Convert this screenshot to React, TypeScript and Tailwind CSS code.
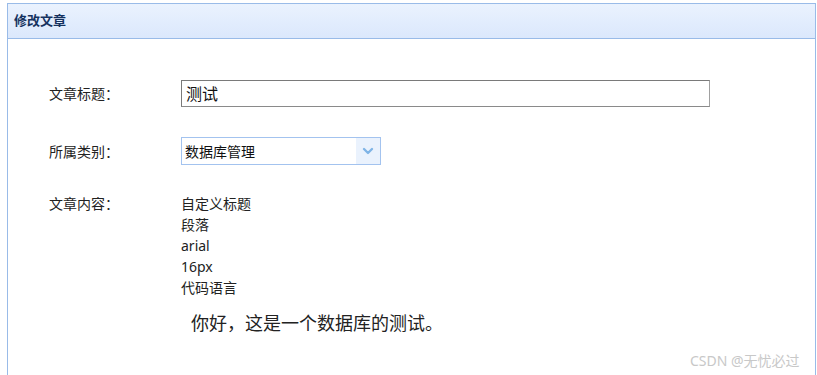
import { ChevronDown } from 'lucide-react';

const font = { fontFamily: '"Noto Sans", "Noto Sans CJK SC", sans-serif' };

export default function App() {
  return (
    <div className="h-[375px] w-[817px] overflow-hidden bg-white pl-[7px] pt-[3px]" style={font}>
      <div className="flex h-[400px] w-[809px] flex-col border border-[#99bbe8] bg-white">
        {/* Header */}
        <div className="flex h-[35px] items-center border-b border-[#99bbe8] bg-gradient-to-b from-[#eaf2fe] to-[#dbe8fc] px-[6px]">
          <span className="text-[13px] font-bold text-[#15325f]">修改文章</span>
        </div>

        {/* Form */}
        <div className="flex flex-col pl-[41px] pt-[41px]">
          <div className="flex h-[27px] items-center">
            <span className="w-[132px] text-[14px] text-[#222]">文章标题：</span>
            <div className="flex h-[27px] w-[529px] items-center border border-t-[#7a7a7a] border-l-[#7a7a7a] border-r-[#a0a0a0] border-b-[#8a8a8a] px-[4px] text-[16px] text-[#111]">
              测试
            </div>
          </div>

          <div className="mt-[30px] flex h-[28px] items-center">
            <span className="w-[132px] text-[14px] text-[#222]">所属类别：</span>
            <div className="flex h-[28px] w-[200px] items-stretch border border-[#a3c3ef]">
              <span className="flex flex-1 items-center px-[3px] text-[14px] text-[#111]">数据库管理</span>
              <span className="flex w-[24px] items-center justify-center bg-[#eaf2fd]">
                <ChevronDown className="h-[16px] w-[16px] text-[#7fb4e6]" strokeWidth={3.5} />
              </span>
            </div>
          </div>

          <div className="mt-[28px] flex">
            <span className="w-[132px] text-[14px] leading-[21px] text-[#222]">文章内容：</span>
            <div className="flex flex-col">
              <div className="text-[14px] leading-[21px] text-[#222]">自定义标题</div>
              <div className="text-[14px] leading-[21px] text-[#222]">段落</div>
              <div className="text-[14px] leading-[21px] text-[#222]">arial</div>
              <div className="text-[14px] leading-[21px] text-[#222]">16px</div>
              <div className="text-[14px] leading-[21px] text-[#222]">代码语言</div>
              <div className="mt-[13px] pl-[10px] text-[18px] leading-[24px] text-[#222]">你好，这是一个数据库的测试。</div>
            </div>
          </div>
        </div>
      </div>
      <span className="absolute left-[690px] top-[350px] text-[14px] text-[#c8c8c8]">CSDN @无忧必过</span>
    </div>
  );
}
